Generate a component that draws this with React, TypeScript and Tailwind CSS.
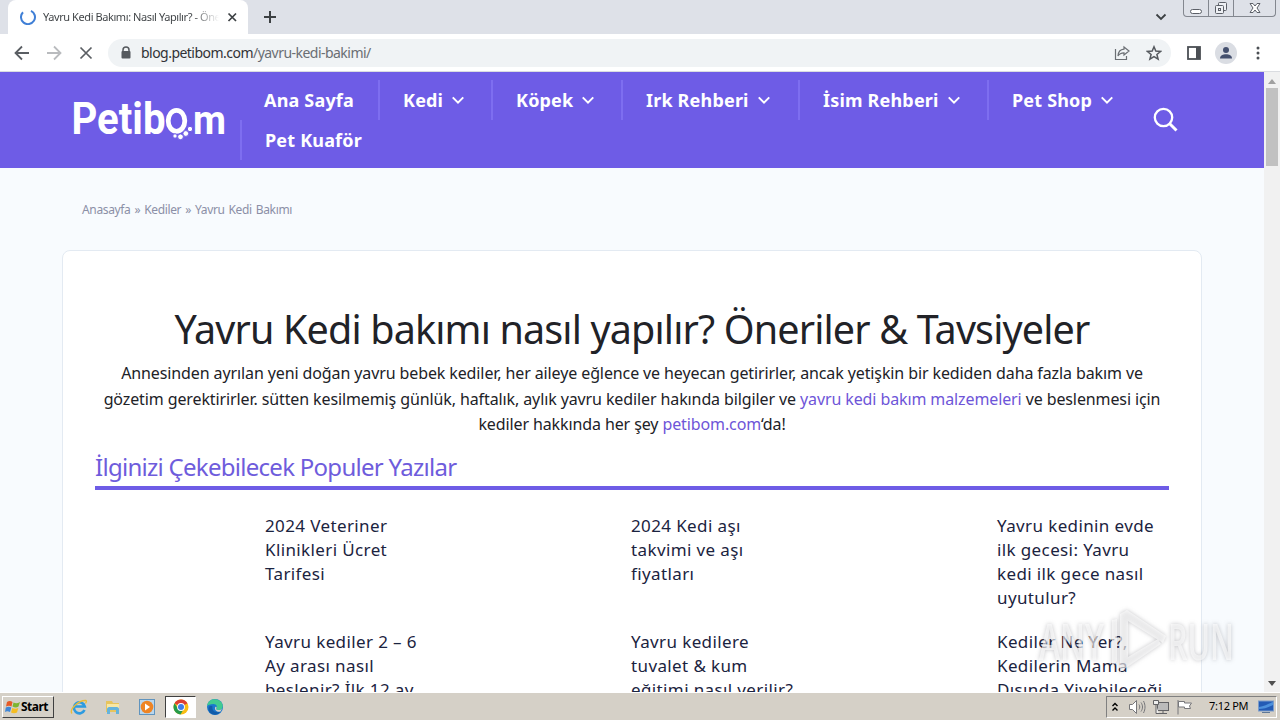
import {ReactNode} from "react";

const menu = [
  {label: "Ana Sayfa", box: "w-[138px] pl-6", arrow: false},
  {label: "Kedi", box: "w-[113px] pl-[23px] border-l-2", arrow: true},
  {label: "Köpek", box: "w-[130px] pl-[23px] border-l-2", arrow: true},
  {label: "Irk Rehberi", box: "w-[177px] pl-[23px] border-l-2", arrow: true},
  {label: "İsim Rehberi", box: "w-[189px] pl-[23px] border-l-2", arrow: true},
  {label: "Pet Shop", box: "w-[143px] pl-[23px] border-l-2", arrow: true},
  {label: "Pet Kuaför", box: "w-[143px] pl-[23px] border-l-2", arrow: false},
];

const posts = [
  ["2024 Veteriner", "Klinikleri Ücret", "Tarifesi"],
  ["2024 Kedi aşı", "takvimi ve aşı", "fiyatları"],
  ["Yavru kedinin evde", "ilk gecesi: Yavru", "kedi ilk gece nasıl", "uyutulur?"],
  ["Yavru kediler 2 – 6", "Ay arası nasıl", "beslenir? İlk 12 ay"],
  ["Yavru kedilere", "tuvalet & kum", "eğitimi nasıl verilir?"],
  ["Kediler Ne Yer?,", "Kedilerin Mama", "Dışında Yiyebileceği"],
];

function Stroke({className, children}: {className: string; children: ReactNode}) {
  return (
    <svg viewBox="0 0 16 16" fill="none" stroke="currentColor" strokeWidth="2" className={className}>
      {children}
    </svg>
  );
}

function TabStrip() {
  return (
    <div className="relative flex h-[34px] shrink-0 bg-[#dee1e8] pl-2">
      <div className="flex h-full w-60 items-center rounded-t-lg bg-white pl-3">
        <Stroke className="h-4 w-4 text-[#3f7fd6]">
          <path d="M11 1.8A7 7 0 1 1 3 3.2" />
        </Stroke>
        <div className="ml-[7px] w-[176px] overflow-hidden whitespace-nowrap bg-gradient-to-r from-[#3c4043] from-85% to-transparent bg-clip-text text-[11px] leading-5 tracking-[-0.42px] text-transparent">
          Yavru Kedi Bakımı: Nasıl Yapılır? - Öneriler
        </div>
        <Stroke className="ml-[5px] h-4 w-4 text-[#3c4043]">
          <path d="M4.500 4.500l7.500 7.500M12 4.500L4.500 12" strokeWidth="1.700" />
        </Stroke>
      </div>
      <Stroke className="ml-3.5 mt-[9px] h-4 w-4 text-[#3c4043]">
        <path d="M8 2v12M2 8h12" />
      </Stroke>
      <Stroke className="ml-auto mr-3.5 mt-[9px] h-4 w-4 text-[#3c4043]">
        <path d="M3.500 5.500L8 10l4.500-4.500" strokeWidth="1.800" />
      </Stroke>
      <div className="mr-1 flex h-[17px] w-[93px] rounded-b border border-t-0 border-[#83878f] text-[#5c6068]">
        <div className="flex w-[25px] items-center justify-center border-r border-[#83878f]">
          <div className="mt-1.5 h-[5px] w-3 rounded-sm border border-[#5c6068] bg-white" />
        </div>
        <div className="flex w-[25px] items-center justify-center border-r border-[#83878f]">
          <svg viewBox="0 0 14 14" className="h-[14px] w-[14px]" fill="#eef0f4" stroke="#5c6068">
            <rect x="4.500" y="1.500" width="8" height="8" rx="1" />
            <rect x="1.500" y="4.500" width="8" height="8" rx="1" />
            <rect x="4.500" y="7.500" width="2" height="2" />
          </svg>
        </div>
        <div className="flex flex-1 items-center justify-center">
          <svg viewBox="0 0 12 12" className="h-3 w-3" fill="#fff" stroke="#5c6068">
            <path d="M1 1.500h3l2 2.500 2-2.500h3L8 6l3 4.500H8L6 8l-2 2.500H1L4 6z" />
          </svg>
        </div>
      </div>
    </div>
  );
}

function Toolbar() {
  return (
    <div className="flex h-[38px] shrink-0 items-center border-b border-[#dadce0] bg-white pl-3.5">
      <Stroke className="h-4 w-4 text-[#5a5e63]">
        <path d="M15 8H2M8 1.500L1.500 8L8 14.500" strokeWidth="1.800" />
      </Stroke>
      <Stroke className="ml-4 h-4 w-4 text-[#b9bbbe]">
        <path d="M1 8h13M8 1.500L14.500 8L8 14.500" strokeWidth="1.800" />
      </Stroke>
      <Stroke className="ml-4 h-4 w-4 text-[#5a5e63]">
        <path d="M2.500 2.500l11 11M13.500 2.500l-11 11" strokeWidth="1.700" />
      </Stroke>
      <div className="ml-3.5 flex h-7 w-[1063px] items-center rounded-full bg-[#f0f3f5] pl-3">
        <svg viewBox="0 0 12 14" className="h-[14px] w-3" fill="#55595e">
          <path d="M3 6V4a3 3 0 0 1 6 0v2" fill="none" stroke="#55595e" strokeWidth="1.500" />
          <rect x="1.500" y="5" width="9" height="7.500" rx="1" />
        </svg>
        <div className="ml-[9px] whitespace-nowrap text-[14px] tracking-[-0.53px] text-[#303236]">
          blog.petibom.com<span className="text-[#6a6e73]">/yavru-kedi-bakimi/</span>
        </div>
        <svg viewBox="0 0 16 16" className="ml-auto h-4 w-4" fill="none" stroke="#6b6f74" strokeWidth="1.200">
          <path d="M1.500 4v10.500h11V11" />
          <path d="M10 2l5 4-5 4V7.800C7 7.800 5.200 8.800 4 11c.2-4 2.500-6.500 6-6.800z" />
        </svg>
        <svg viewBox="0 0 16 16" className="ml-4 mr-[9px] h-4 w-4" fill="none" stroke="#55595e" strokeWidth="1.500">
          <path d="M8 1.800l1.800 4.300 4.700.4-3.600 3 1.200 4.600L8 11.600l-4.100 2.500 1.200-4.600-3.600-3 4.700-.4z" />
        </svg>
      </div>
      <svg viewBox="0 0 14 14" className="ml-4 h-[14px] w-[14px]" fill="none" stroke="#4b4f54" strokeWidth="1.800">
        <rect x="1" y="1" width="12" height="12" />
        <path d="M11 1v12" strokeWidth="4" />
      </svg>
      <svg viewBox="0 0 22 22" className="ml-3.5 h-[22px] w-[22px]">
        <circle cx="11" cy="11" r="11" fill="#dadde3" />
        <circle cx="11" cy="8" r="3" fill="#44506e" />
        <path d="M5 16.500c0-3 3-4.300 6-4.300s6 1.300 6 4.300z" fill="#44506e" />
      </svg>
      <svg viewBox="0 0 4 14" className="ml-[19px] h-[14px] w-1" fill="#4b4f54">
        <circle cx="2" cy="2" r="1.500" />
        <circle cx="2" cy="7" r="1.500" />
        <circle cx="2" cy="12" r="1.500" />
      </svg>
    </div>
  );
}

function Logo() {
  return (
    <svg viewBox="0 0 156 44" className="h-11 w-[156px]" fill="#fff" fontFamily="Roboto" fontWeight="700">
      <text x="-.5" y="35.500" fontSize="45" textLength="94" lengthAdjust="spacingAndGlyphs">Petib</text>
      <ellipse cx="104.500" cy="22.800" rx="8.300" ry="10.500" fill="none" stroke="#fff" strokeWidth="4.800" />
      <text x="121" y="35.500" fontSize="41" textLength="33" lengthAdjust="spacingAndGlyphs">m</text>
      <g stroke="#6e5ce6" strokeWidth="1">
        <circle cx="103" cy="38" r="2.200" />
        <circle cx="108.500" cy="38.800" r="2.900" />
        <circle cx="113.800" cy="35.500" r="2.900" />
        <circle cx="118" cy="31" r="2.700" />
      </g>
    </svg>
  );
}

function SiteHeader() {
  return (
    <header className="flex h-24 shrink-0 items-center bg-[#6e5ce6] pl-[72px] text-white">
      <Logo />
      <nav className="ml-3 flex w-[900px] flex-wrap">
        {menu.map((item) => (
          <a key={item.label} className={`flex h-10 items-center whitespace-nowrap border-[#7e6ef0] text-[18px] font-bold tracking-[0.18px] ${item.box}`}>
            {item.label}
            {item.arrow && (
              <Stroke className="ml-2 h-[14px] w-[14px]">
                <path d="M2 5l6 6 6-6" strokeWidth="2.300" />
              </Stroke>
            )}
          </a>
        ))}
      </nav>
      <svg viewBox="0 0 26 26" className="ml-[13px] h-[26px] w-[26px]" fill="none" stroke="#fff" strokeWidth="2.300">
        <circle cx="10.500" cy="10.500" r="8.700" />
        <path d="M16.500 16.500l7 7" strokeWidth="3" />
      </svg>
    </header>
  );
}

function Article() {
  return (
    <main className="flex-1 pl-[62px]">
      <div className="ml-5 mt-[33px] h-[18px] whitespace-nowrap text-[12px] leading-[18px] tracking-[-0.35px] text-[#8b8fa6] [word-spacing:1.2px]">
        Anasayfa » Kediler » Yavru Kedi Bakımı
      </div>
      <article className="mt-[31px] h-[700px] w-[1140px] rounded-lg border border-[#e3eaf2] bg-white px-8 pt-[54px] text-[#212227]">
        <h1 className="whitespace-nowrap text-center text-[39.500px] leading-[48px] tracking-[-0.85px]">
          Yavru Kedi bakımı nasıl yapılır? Öneriler & Tavsiyeler
        </h1>
        <p className="mt-2 whitespace-nowrap text-center text-[16px] leading-[25.6px] tracking-[-0.11px]">
          <span className="block">
            Annesinden ayrılan yeni doğan yavru bebek kediler, her aileye eğlence ve heyecan getirirler, ancak yetişkin bir kediden daha fazla bakım ve
          </span>
          <span className="block">
            gözetim gerektirirler. sütten kesilmemiş günlük, haftalık, aylık yavru kediler hakında bilgiler ve{" "}
            <a className="text-[#6e55d8]">yavru kedi bakım malzemeleri</a> ve beslenmesi için
          </span>
          <span className="block">
            kediler hakkında her şey <a className="text-[#6e55d8]">petibom.com</a>‘da!
          </span>
        </p>
        <h2 className="mt-[13px] h-[39px] whitespace-nowrap border-b-4 border-[#6e5ce6] text-[24px] leading-8 tracking-[-0.72px] text-[#6e5cdc]">
          İlginizi Çekebilecek Populer Yazılar
        </h2>
        <div className="ml-[170px] mt-6 grid grid-cols-[366px_366px_180px] gap-y-5 whitespace-nowrap text-[17px] leading-6 tracking-[0.38px] text-[#1b2340]">
          {posts.map((lines) => (
            <a key={lines[0]}>
              {lines.map((line) => (
                <div key={line}>{line}</div>
              ))}
            </a>
          ))}
        </div>
      </article>
    </main>
  );
}

function Scrollbar() {
  return (
    <div className="flex w-4 shrink-0 flex-col items-center justify-between bg-[#f1f1f1] pb-1.5 pt-[7px]">
      <div className="flex flex-col items-center">
        <svg viewBox="0 0 8 5" className="h-[5px] w-2" fill="#a0a0a0"><path d="M0 5l4-5 4 5z" /></svg>
        <div className="mt-1 h-[78px] w-3 bg-[#c1c1c1]" />
      </div>
      <svg viewBox="0 0 8 5" className="h-[5px] w-2" fill="#505050"><path d="M0 0l4 5 4-5z" /></svg>
    </div>
  );
}

function Watermark() {
  return (
    <svg viewBox="0 0 200 64" className="absolute left-[1036px] top-[608px] h-16 w-[200px] drop-shadow-[0_0_2px_rgba(70,70,80,0.5)]" fill="#fff" fillOpacity="0.6" fontFamily="Open Sans" fontWeight="600">
      <text x="3" y="52" fontSize="50" textLength="65" lengthAdjust="spacingAndGlyphs">ANY</text>
      <path d="M76 59V12l5-1v42zM84 6l7-4 39 26-3 7-35-22v36l30-18 3 5-41 28z" />
      <text x="132" y="52" fontSize="50" textLength="66" lengthAdjust="spacingAndGlyphs">RUN</text>
    </svg>
  );
}

function Taskbar() {
  return (
    <div className="flex h-7 shrink-0 items-center border-t border-white bg-[#d5d0c7] text-black">
      <div className="ml-0.5 flex h-[22px] w-[52px] items-center border border-b-[#404040] border-l-white border-r-[#404040] border-t-white pl-0.5">
        <svg viewBox="0 0 16 16" className="h-4 w-4 shrink-0">
          <path d="M2 3c2-1.500 4-1 5.500 0L6.500 7.500C5 6.500 3 6.500 1 7.500z" fill="#e65a26" />
          <path d="M8.500 3.500c2 1 4 1 6.500-.5l-1.500 4.500c-2 1.500-4 1-6 0z" fill="#7db52f" />
          <path d="M.8 8.500c2-1 4-1 5.500 0L5 13c-2-1-3.500-1-5 0z" fill="#3f86d6" />
          <path d="M7.300 9c2 1 4 1 6 0L12 13.500c-2 1-4 1-6 0z" fill="#f5bd22" />
        </svg>
        <span className="text-[12px] font-bold tracking-[-0.5px]">Start</span>
      </div>
      <svg viewBox="0 0 18 18" className="ml-4 h-[18px] w-[18px]" fill="none">
        <path d="M14.500 12a5.500 5.500 0 1 1 .3-3.500H5" stroke="#2d9be0" strokeWidth="2.600" />
        <path d="M2 15.500C-1 12 8 2 16 2.500c1 .5 0 2-.5 3" stroke="#e9bc37" strokeWidth="1.300" />
      </svg>
      <svg viewBox="0 0 18 18" className="ml-4 h-[18px] w-[18px]">
        <path d="M2 3h6l1 2h6v9H2z" fill="#e7c45d" />
        <path d="M3 6h12v6H3z" fill="#f8e7a4" />
        <path d="M3 16v-5c0-1 1-2 2-2h8c1 0 2 1 2 2v5h-3v-4H6v4z" fill="#65b3dc" />
      </svg>
      <svg viewBox="0 0 18 18" className="ml-4 h-[18px] w-[18px]">
        <rect x="1.500" y="1.500" width="15" height="15" fill="#b9d6ed" stroke="#6094be" />
        <circle cx="9" cy="9" r="6.300" fill="#ee8424" />
        <path d="M7 5.500l5 3.500-5 3.500z" fill="#fff" />
      </svg>
      <div className="ml-[9px] flex h-[22px] w-[31px] items-center justify-center border border-b-white border-l-[#404040] border-r-white border-t-[#404040] bg-white">
        <svg viewBox="0 0 16 16" className="h-4 w-4">
          <circle cx="8" cy="8" r="7.500" fill="#f9bd13" />
          <path d="M8 8L1.500 4.200A7.500 7.500 0 0 1 14.500 4.300z" fill="#dd3f33" />
          <path d="M1.500 4.200A7.500 7.500 0 0 0 7.500 15.500L11 9.500H5z" fill="#269b4b" />
          <circle cx="8" cy="8" r="3.900" fill="#fff" />
          <circle cx="8" cy="8" r="3" fill="#3f7de8" />
        </svg>
      </div>
      <svg viewBox="0 0 18 18" className="ml-2.5 h-[18px] w-[18px]">
        <circle cx="9" cy="9" r="8" fill="#1b78ce" />
        <path d="M1 8C2 2 7 .5 11 1.500c5 1.500 7 6 5 9-1.500 2-5 2-6 .5 2-2 .5-5-2.500-5C4 6 2 7 1 8z" fill="#42cb91" />
        <path d="M6.500 8.500c-1 4 3 7 8 5C11 19 3 17 2.500 11c0-3 2.500-4 4-2.500z" fill="#125ca9" />
        <path d="M10 8.500c1 1 .5 2 0 2.500 1 1.500 4.500 1.500 6-.3l-1.500 2.800c-3 1-6-1-5.500-4z" fill="#d5d0c7" />
      </svg>
      <div className="ml-auto mr-[3px] flex h-[22px] w-[171px] items-center border border-b-white border-l-[#808080] border-r-white border-t-[#808080] pl-1">
        <svg viewBox="0 0 8 10" className="h-2.5 w-2" fill="none" stroke="#000" strokeWidth="1.400">
          <path d="M1.500 4L4 1.500 6.500 4M1.500 8.500L4 6l2.500 2.500" />
        </svg>
        <svg viewBox="0 0 18 16" className="ml-[9px] h-4 w-[18px]" fill="#fff" stroke="#77777a">
          <path d="M1.500 5.500h3L8.500 1.500v13l-4-4h-3z" />
          <path d="M11 5.500c1 1.500 1 3.500 0 5M13 3.500c2 3 2 6 0 9M15.500 2c2 4 2 8 0 12" fill="none" />
        </svg>
        <svg viewBox="0 0 18 16" className="ml-1.5 h-4 w-[18px]" fill="#eee" stroke="#626265">
          <rect x="5.500" y="3.500" width="11" height="8" fill="#bbb" />
          <path d="M7 14.500h8M11 12v2" />
          <path d="M1.500 1.500h5v4h-5zM4 6v8.500h3" />
        </svg>
        <svg viewBox="0 0 17 16" className="ml-1.5 h-4 w-[17px]" fill="#fff" stroke="#77777a">
          <path d="M2 1v14.500M2.500 2.500h6v1.500h7l-2 3 1 2.500h-6V8h-6z" />
        </svg>
        <span className="ml-4 whitespace-nowrap text-[11px] tracking-[-0.3px]">7:12 PM</span>
        <svg viewBox="0 0 16 14" className="ml-auto mr-0.5 h-[14px] w-4">
          <rect x=".5" y="1" width="15" height="10" fill="#235bb5" stroke="#7c9cc9" />
          <path d="M1 7c5-1 9-3 14-5v3C10 8 5 9 1 9z" fill="#4d91dc" />
          <path d="M4 12.500h8" stroke="#5f7897" />
        </svg>
      </div>
    </div>
  );
}

export default function App() {
  return (
    <div className="relative flex h-[720px] w-[1280px] flex-col overflow-hidden bg-white font-['Noto_Sans',sans-serif]">
      <TabStrip />
      <Toolbar />
      <div className="flex h-[620px] shrink-0">
        <div className="flex w-[1264px] flex-col overflow-hidden bg-[#f8fbfe]">
          <SiteHeader />
          <Article />
        </div>
        <Scrollbar />
      </div>
      <Taskbar />
      <Watermark />
    </div>
  );
}
